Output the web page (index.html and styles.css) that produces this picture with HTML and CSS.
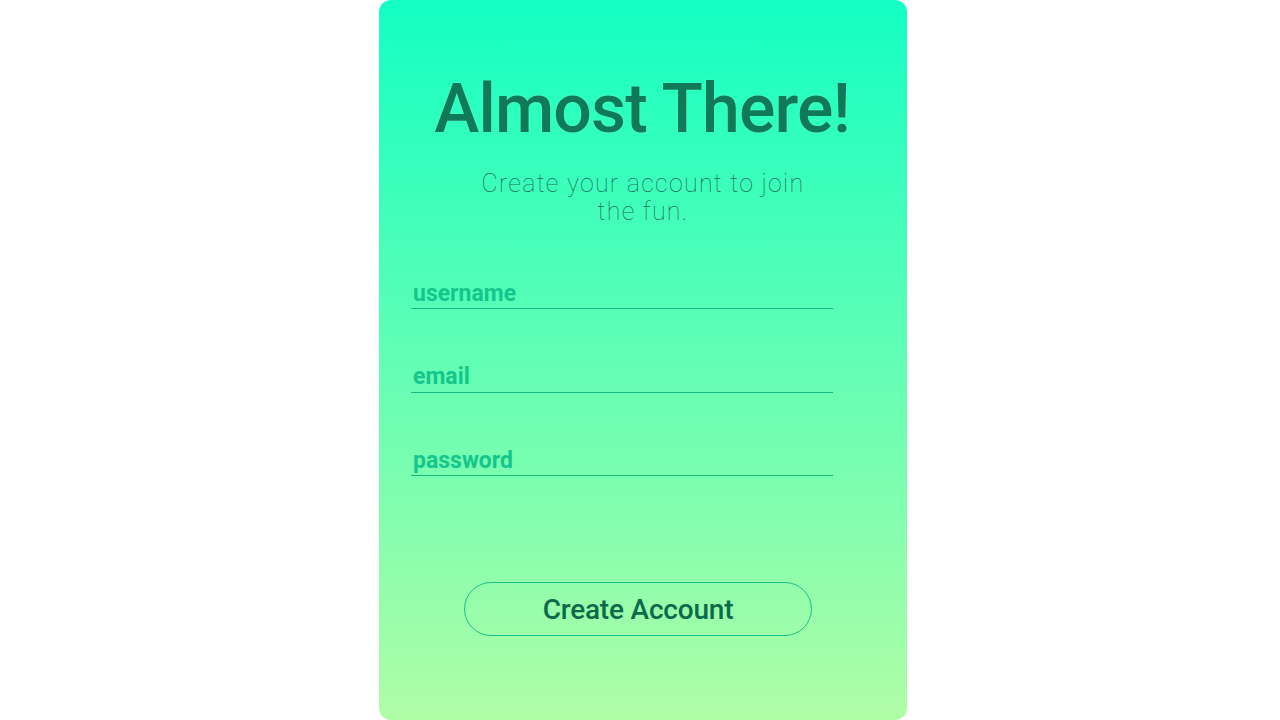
FILE: index.html
```html
<!DOCTYPE html>
<html lang="en">
<head>
<meta charset="utf-8">
<title>Almost There!</title>
<link rel="stylesheet" href="styles.css">
</head>
<body>
<main class="card">
  <h1 class="title">Almost There!</h1>
  <p class="subtitle">Create your account to join the fun.</p>
  <form class="form">
    <input class="field" type="text" placeholder="username">
    <input class="field" type="email" placeholder="email">
    <input class="field" type="password" placeholder="password">
  </form>
  <button class="btn" type="button">Create Account</button>
</main>
</body>
</html>
```
FILE: styles.css
```css
* { box-sizing: border-box; }
html, body { margin: 0; padding: 0; height: 100%; }
body {
  background: #ffffff;
  display: flex;
  justify-content: center;
  padding-left: 6px;
  font-family: Roboto, "Liberation Sans", sans-serif;
  overflow: hidden;
}
.card {
  width: 528px;
  height: 720px;
  border-radius: 12px;
  background: linear-gradient(to bottom, #13ffc3 0%, #b0fda6 100%);
  display: flex;
  flex-direction: column;
  align-items: center;
  padding-top: 69px;
}
.title {
  margin: 0 0 0 -2px;
  font-size: 68px;
  line-height: 80px;
  font-weight: 500;
  color: #107a58;
  text-shadow: 0 0 1px rgba(170, 255, 215, 0.8);
  letter-spacing: -0.85px;
}
.subtitle {
  margin: 21px 0 0;
  width: 350px;
  font-size: 25px;
  line-height: 28px;
  font-weight: 100;
  letter-spacing: 1.25px;
  color: #1b6e50;
  text-align: center;
}
.form {
  align-self: stretch;
  width: 80%;
  margin: 52px 0 0 32px;
  display: flex;
  flex-direction: column;
  gap: 52.5px;
}
.field {
  display: block;
  width: 100%;
  height: 31px;
  padding: 0 2px;
  margin: 0;
  border: none;
  border-bottom: 1px solid #18b783;
  background: transparent;
  outline: none;
  font-family: Roboto, "Liberation Sans", sans-serif;
  font-size: 23px;
  font-weight: 700;
  color: #0d6b4c;
}
.field::placeholder { color: #12c68c; opacity: 1; }
.btn {
  align-self: flex-start;
  margin: 106px 0 0 85px;
  width: 348px;
  height: 54px;
  border: 1px solid #1cc08c;
  border-radius: 27px;
  background: transparent;
  font-family: Roboto, "Liberation Sans", sans-serif;
  font-size: 28px;
  font-weight: 500;
  letter-spacing: -0.2px;
  color: #0b6a4a;
  cursor: pointer;
}
```
